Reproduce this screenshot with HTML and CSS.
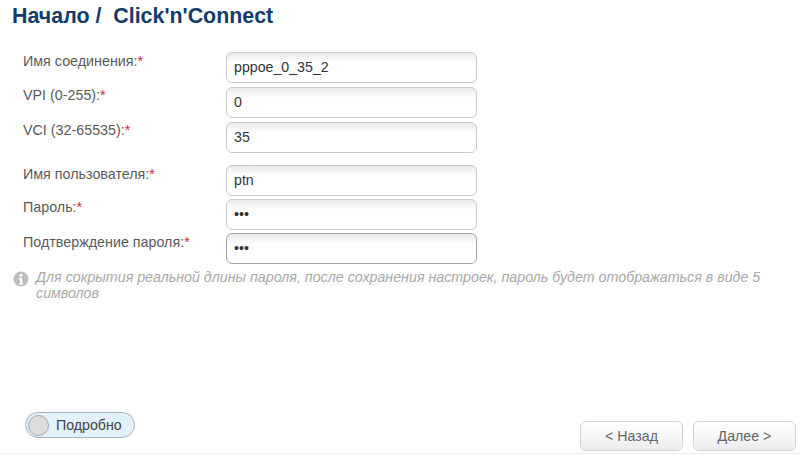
FILE: index.html
```html
<!DOCTYPE html>
<html lang="ru">
<head>
<meta charset="utf-8">
<title>Click'n'Connect</title>
<link rel="stylesheet" href="styles.css">
</head>
<body>
<div class="page">
  <h1 class="title">Начало /&nbsp; Click'n'Connect</h1>
  <div class="form">
    <div class="group group-wide">
      <div class="row"><label class="label">Имя соединения:<span class="req">*</span></label><input class="field" type="text" value="pppoe_0_35_2"></div>
      <div class="row"><label class="label label-high">VPI (0-255):<span class="req">*</span></label><input class="field" type="text" value="0"></div>
      <div class="row"><label class="label label-high">VCI (32-65535):<span class="req">*</span></label><input class="field" type="text" value="35"></div>
    </div>
    <div class="group">
      <div class="row"><label class="label">Имя пользователя:<span class="req">*</span></label><input class="field" type="text" value="ptn"></div>
      <div class="row"><label class="label label-high">Пароль:<span class="req">*</span></label><input class="field" type="password" value="ptn"></div>
      <div class="row"><label class="label">Подтверждение пароля:<span class="req">*</span></label><input class="field field-focus" type="password" value="ptn"></div>
    </div>
  </div>
  <div class="note">
    <svg class="note-icon" viewBox="0 0 16 16" width="16" height="16" aria-hidden="true"><circle cx="8" cy="8" r="7.5" fill="#bdbdbd"/><circle cx="8" cy="4.3" r="1.6" fill="#fff"/><path d="M5.8 7h3.4v5h1.2v1.4H5.8V12H7V8.4H5.8z" fill="#fff"/></svg>
    <p class="note-text">Для сокрытия реальной длины пароля, после сохранения настроек, пароль будет отображаться в виде 5 символов</p>
  </div>
  <div class="footer">
    <div class="toggle"><span class="knob"></span><span class="toggle-text">Подробно</span></div>
    <div class="actions">
      <button class="btn" type="button">&lt; Назад</button>
      <button class="btn" type="button">Далее &gt;</button>
    </div>
  </div>
</div>
</body>
</html>
```
FILE: styles.css
```css
* { box-sizing: border-box; }
html, body { margin: 0; height: 100%; background: #fff; overflow: hidden; }
body { font-family: "Liberation Sans", Arial, sans-serif; color: #555; }
.page { width: 800px; height: 458px; display: flex; flex-direction: column; }
.title { margin: 4px 0 0 12px; font-size: 21.4px; line-height: 24px; font-weight: bold; color: #123c69; }
.form { margin: 24px 0 0 23px; display: flex; flex-direction: column; gap: 12px; }
.group { display: flex; flex-direction: column; gap: 3px; }
.group-wide { gap: 4px; }
.row { display: flex; height: 31px; align-items: flex-start; }
.label { width: 203px; font-size: 14.3px; line-height: 18px; color: #5a5a5a; }
.label-high { margin-top: -1px; }
.req { color: #d8253f; }
.field { width: 251px; height: 31px; padding: 0 7px 2px; border: 1px solid #cacaca; border-radius: 6px; font: 14.2px "Liberation Sans", Arial, sans-serif; color: #333; background: linear-gradient(#e9e9e9, #fff 10px); outline: none; }
.field-focus { border-color: #a3a3a3; }
.note { display: flex; align-items: flex-start; gap: 6px; margin: 5px 20px 0 13px; }
.note-icon { flex: none; margin-top: 2px; }
.note-text { margin: 0; padding-left: 1px; font-size: 14.25px; line-height: 16px; font-style: italic; color: #a8a8a8; }
.footer { margin-top: auto; margin-bottom: 4px; height: 44px; padding: 0 4px 0 25px; display: flex; justify-content: space-between; border-bottom: 1px solid #eee; }
.toggle { margin-top: 2px; width: 110px; height: 26px; border: 1px solid #a8b2ba; border-radius: 13px; background: #e2f2fc; display: flex; align-items: center; padding-left: 2px; gap: 7px; }
.knob { width: 21px; height: 21px; border-radius: 50%; background: #dcdcdc; border: 1px solid #a5a5a5; }
.toggle-text { font-size: 14.2px; color: #444; }
.actions { display: flex; gap: 10px; padding-top: 11px; }
.btn { width: 103px; height: 30px; border: 1px solid #d4d4d4; border-radius: 6px; background: linear-gradient(#fff, #ececec); font: 14.2px "Liberation Sans", Arial, sans-serif; color: #666; padding: 0; }
```
